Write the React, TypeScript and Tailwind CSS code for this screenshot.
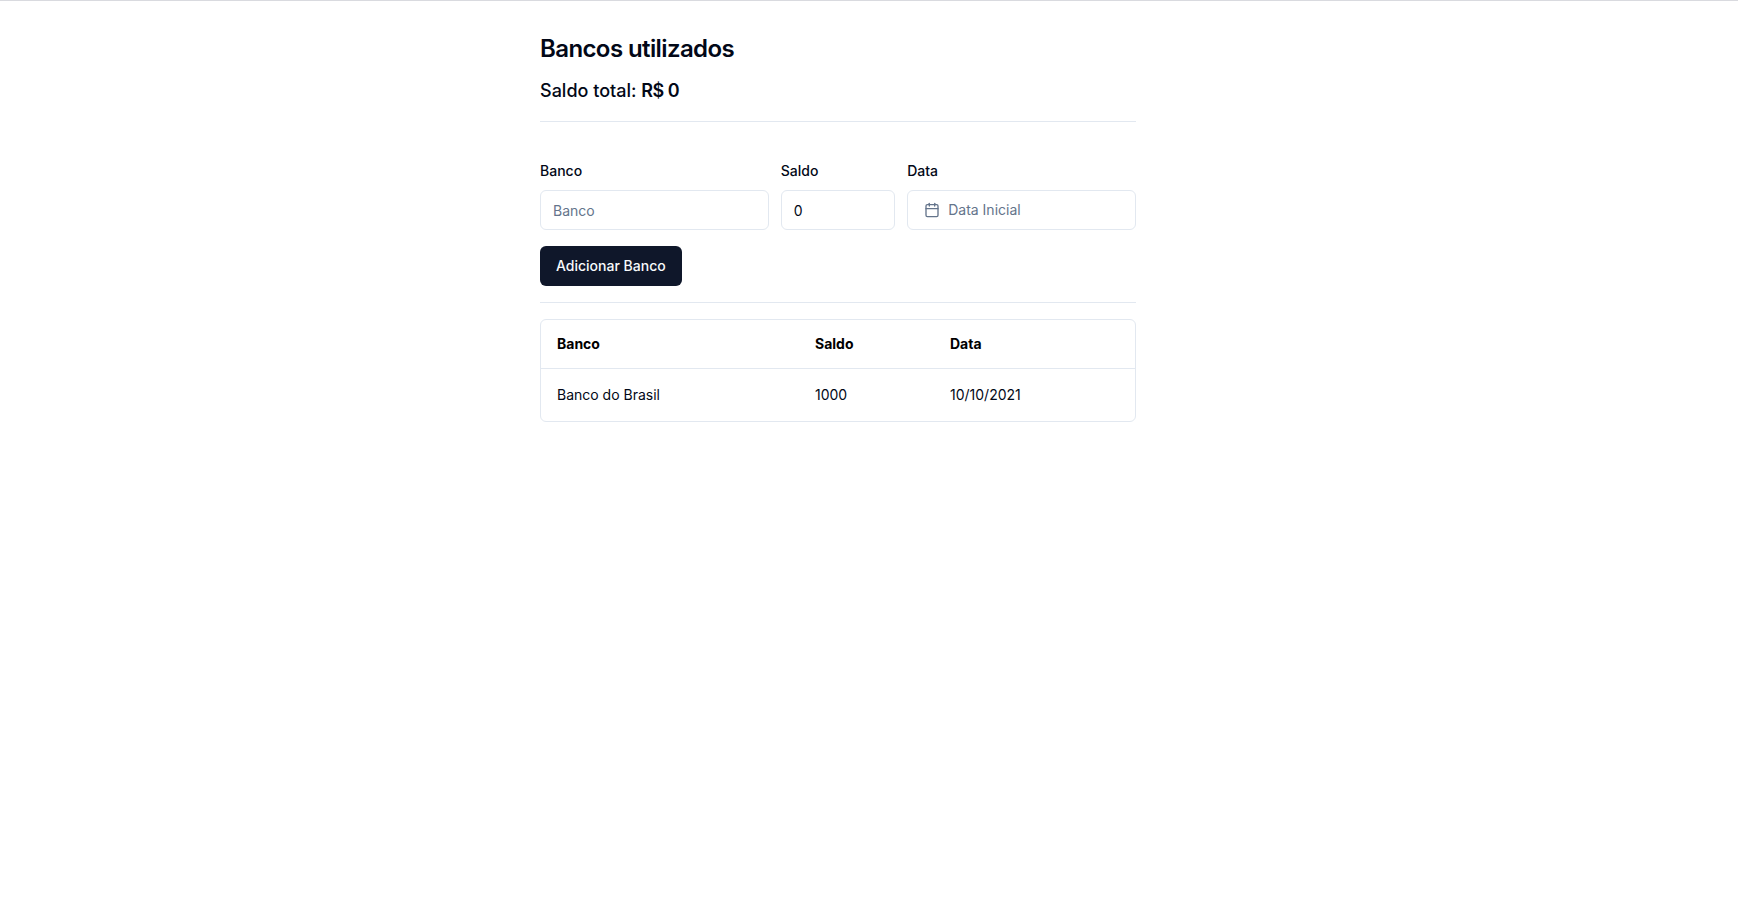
import { useState } from "react";
import { Calendar } from "lucide-react";

interface Bank {
  name: string;
  balance: number;
  date: string;
}

const banks: Bank[] = [{ name: "Banco do Brasil", balance: 1000, date: "10/10/2021" }];

const inputClass =
  "h-10 w-full rounded-md border border-[#e2e8f0] bg-white px-3 py-2 text-sm placeholder:text-[#64748b]";
const labelClass = "text-sm leading-none font-medium";

function BankForm() {
  const [name, setName] = useState("");
  const [balance, setBalance] = useState("0");

  return (
    <form className="mt-[42px]" onSubmit={(event) => event.preventDefault()}>
      <div className="grid grid-cols-[2fr_1fr_2fr] gap-3">
        <div className="flex min-w-0 flex-col gap-3">
          <label htmlFor="bank" className={labelClass}>
            Banco
          </label>
          <input
            id="bank"
            className={inputClass}
            placeholder="Banco"
            value={name}
            onChange={(event) => setName(event.target.value)}
          />
        </div>
        <div className="flex min-w-0 flex-col gap-3">
          <label htmlFor="balance" className={labelClass}>
            Saldo
          </label>
          <input
            id="balance"
            className={inputClass}
            inputMode="decimal"
            value={balance}
            onChange={(event) => setBalance(event.target.value)}
          />
        </div>
        <div className="flex min-w-0 flex-col gap-3">
          <label htmlFor="date" className={labelClass}>
            Data
          </label>
          <button
            id="date"
            type="button"
            className="flex h-10 w-full items-center gap-2 rounded-md border border-[#e2e8f0] bg-white px-4 text-sm text-[#64748b]"
          >
            <Calendar className="size-4" aria-hidden="true" />
            Data Inicial
          </button>
        </div>
      </div>
      <button
        type="submit"
        className="mt-4 h-10 rounded-md bg-[#0f172a] px-4 text-sm font-medium text-[#f8fafc]"
      >
        Adicionar Banco
      </button>
    </form>
  );
}

function BankTable() {
  return (
    <div className="mt-4 overflow-hidden rounded-md border border-[#e2e8f0]">
      <table className="w-full table-fixed text-left text-sm">
        <thead>
          <tr className="h-12 border-b border-[#e2e8f0] text-black">
            <th className="w-[258px] px-4 font-bold">Banco</th>
            <th className="w-[135px] px-4 font-bold">Saldo</th>
            <th className="px-4 font-bold">Data</th>
          </tr>
        </thead>
        <tbody>
          {banks.map((bank) => (
            <tr key={bank.name}>
              <td className="p-4">{bank.name}</td>
              <td className="p-4">{bank.balance}</td>
              <td className="p-4">{bank.date}</td>
            </tr>
          ))}
        </tbody>
      </table>
    </div>
  );
}

export default function App() {
  return (
    <div className="min-h-screen border-t border-[#d9dadf] bg-white pr-[62px] font-['Inter',sans-serif] text-[#020817]">
      <main className="mx-auto max-w-[596px] pt-8 pb-8">
        <h1 className="text-2xl font-semibold tracking-tight">Bancos utilizados</h1>
        <p className="mt-3 text-lg font-medium">
          Saldo total: <strong className="font-semibold tracking-tight">R$ 0</strong>
        </p>
        <hr className="mt-4 border-[#e2e8f0]" />
        <BankForm />
        <hr className="mt-4 border-[#e2e8f0]" />
        <BankTable />
      </main>
    </div>
  );
}
